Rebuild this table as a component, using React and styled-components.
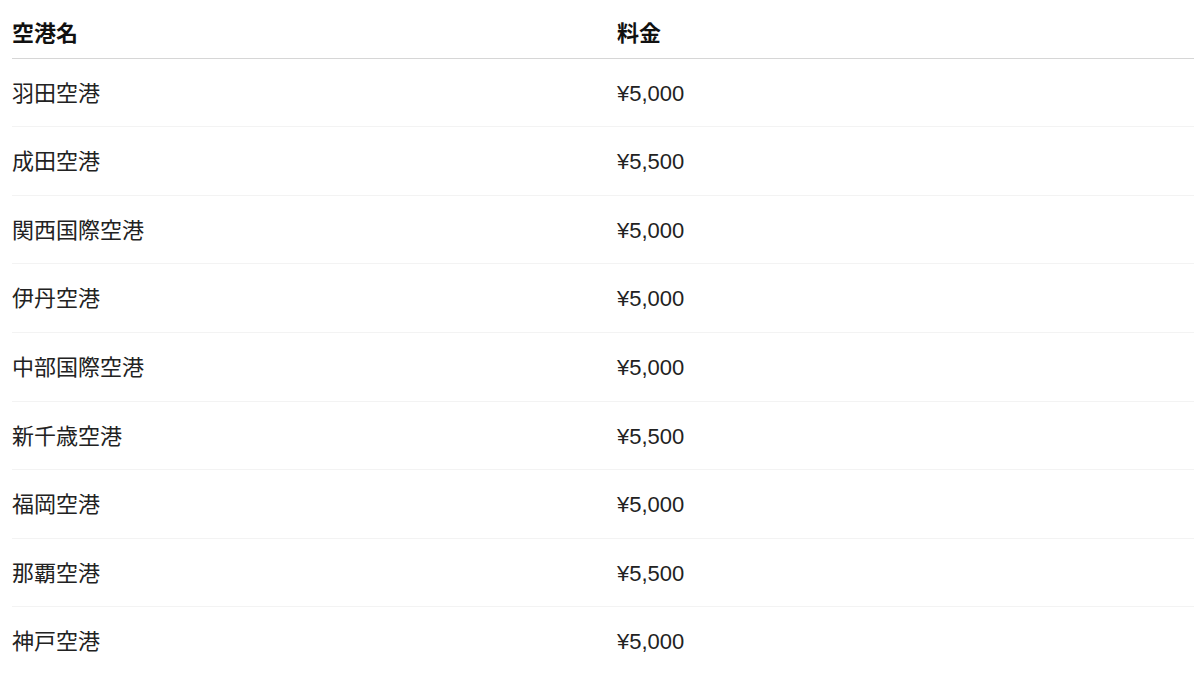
import React from 'react';
import styled, { createGlobalStyle } from 'styled-components';

const GlobalStyle = createGlobalStyle`
  body {
    margin: 0;
    background: #ffffff;
    font-family: "Liberation Sans", "Noto Sans CJK JP", sans-serif;
  }
`;

const fares = [
  { airport: '羽田空港', price: '¥5,000' },
  { airport: '成田空港', price: '¥5,500' },
  { airport: '関西国際空港', price: '¥5,000' },
  { airport: '伊丹空港', price: '¥5,000' },
  { airport: '中部国際空港', price: '¥5,000' },
  { airport: '新千歳空港', price: '¥5,500' },
  { airport: '福岡空港', price: '¥5,000' },
  { airport: '那覇空港', price: '¥5,500' },
  { airport: '神戸空港', price: '¥5,000' },
];

const Wrapper = styled.div`
  padding-left: 12px;
`;

const Table = styled.div`
  display: flex;
  flex-direction: column;
`;

const Row = styled.div`
  display: grid;
  grid-template-columns: 605px 1fr;
  padding: ${props => (props.head ? '17px 0 7px' : '18px 0 16px')};
  border-bottom: ${props => (props.head ? '1.5px solid #d6d6d6' : '1px solid #f3f3f3')};
  &:last-child {
    border-bottom: none;
  }
`;

const Cell = styled.div`
  font-size: 22px;
  line-height: 33.6px;
  color: ${props => (props.head ? '#111111' : '#222222')};
  font-weight: ${props => (props.head ? 700 : 400)};
`;

const FareTable = () => {
  return (
    <Table>
      <Row head>
        <Cell head>空港名</Cell>
        <Cell head>料金</Cell>
      </Row>
      {fares.map(fare => (
        <Row key={fare.airport}>
          <Cell>{fare.airport}</Cell>
          <Cell>{fare.price}</Cell>
        </Row>
      ))}
    </Table>
  );
};

export default function App() {
  return (
    <>
      <GlobalStyle />
      <Wrapper>
        <FareTable />
      </Wrapper>
    </>
  );
}
